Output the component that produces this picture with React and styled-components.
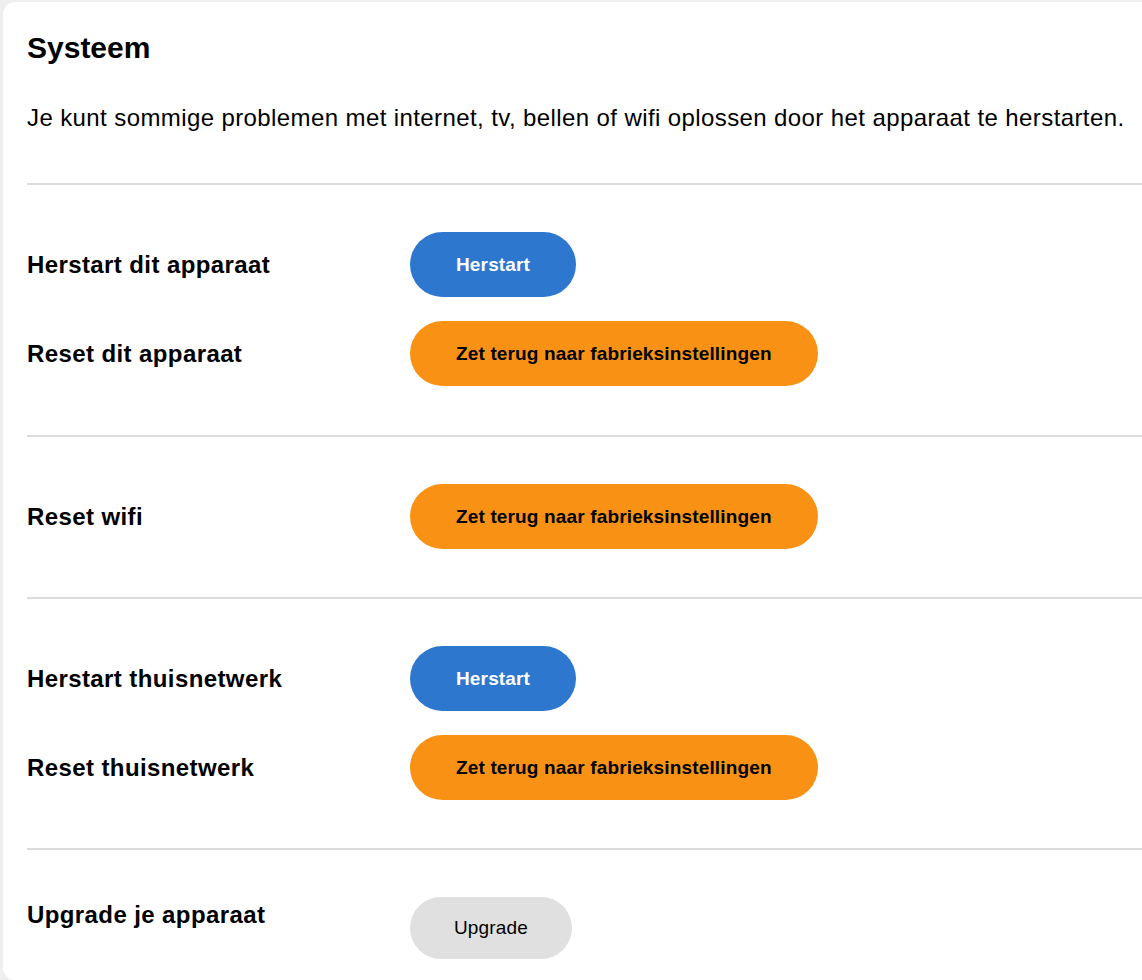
import styled, { createGlobalStyle } from "styled-components"

const GlobalStyle = createGlobalStyle`
    html, body {
        margin: 0;
        padding: 0;
        background: #efefef;
        font-family: "Liberation Sans", Arial, sans-serif;
        color: #000;
        overflow: hidden;
    }
`;

const Page = styled.div`
    padding: 2px 0 0 3px;
    height: 980px;
    box-sizing: border-box;
`;

const Card = styled.div`
    background: #fff;
    border-radius: 12px 0 0 12px;
    padding: 28px 0 0 24px;
    height: 978px;
    box-sizing: border-box;
`;

const Title = styled.h1`
    margin: 0;
    font-size: 30px;
    line-height: 36px;
    font-weight: 700;
`;

const Intro = styled.p`
    margin: 37px 0 0;
    font-size: 24px;
    line-height: 29px;
    letter-spacing: 0.4px;
    white-space: nowrap;
`;

const Section = styled.section`
    border-top: 2px solid #dcdcdc;
    margin-top: ${p => p.$first ? "51px" : "0"};
    padding: 47px 0 ${p => p.$last ? "20px" : p.$first ? "49px" : "48px"};
    display: flex;
    flex-direction: column;
    gap: 24px;
`;

const Row = styled.div`
    display: flex;
    align-items: ${p => p.$top ? "flex-start" : "center"};
`;

const Label = styled.span`
    width: 383px;
    flex-shrink: 0;
    font-size: 24px;
    line-height: 29px;
    font-weight: 700;
    letter-spacing: 0.4px;
    margin-top: ${p => p.$top ? "3px" : "0"};
`;

const colors = {
    blue: { bg: "#2d77cf", fg: "#fff", weight: 700, pad: 46 },
    orange: { bg: "#f99214", fg: "#000", weight: 700, pad: 46 },
    gray: { bg: "#e0e0e0", fg: "#000", weight: 400, pad: 44 },
};

const Button = styled.button`
    font-family: "Liberation Sans", Arial, sans-serif;
    height: ${p => p.$variant === "gray" ? "62px" : "65px"};
    padding: 0 ${p => colors[p.$variant].pad}px;
    border: none;
    border-radius: 33px;
    font-size: 19px;
    letter-spacing: 0.15px;
    font-weight: ${p => colors[p.$variant].weight};
    background: ${p => colors[p.$variant].bg};
    color: ${p => colors[p.$variant].fg};
    cursor: pointer;
    white-space: nowrap;
`;

const sections = [
    [
        { label: "Herstart dit apparaat", button: "Herstart", variant: "blue" },
        { label: "Reset dit apparaat", button: "Zet terug naar fabrieksinstellingen", variant: "orange" },
    ],
    [
        { label: "Reset wifi", button: "Zet terug naar fabrieksinstellingen", variant: "orange" },
    ],
    [
        { label: "Herstart thuisnetwerk", button: "Herstart", variant: "blue" },
        { label: "Reset thuisnetwerk", button: "Zet terug naar fabrieksinstellingen", variant: "orange" },
    ],
    [
        { label: "Upgrade je apparaat", button: "Upgrade", variant: "gray", top: true },
    ],
];

const App = () => {
  return (
    <Page>
      <GlobalStyle />
      <Card>
        <Title>Systeem</Title>
        <Intro>Je kunt sommige problemen met internet, tv, bellen of wifi oplossen door het apparaat te herstarten.</Intro>
        {sections.map((rows, i) => (
          <Section key={i} $first={i === 0} $last={i === sections.length - 1}>
            {rows.map(r => (
              <Row key={r.label} $top={r.top}>
                <Label $top={r.top}>{r.label}</Label>
                <Button $variant={r.variant}>{r.button}</Button>
              </Row>
            ))}
          </Section>
        ))}
      </Card>
    </Page>
  )
}

export default App
